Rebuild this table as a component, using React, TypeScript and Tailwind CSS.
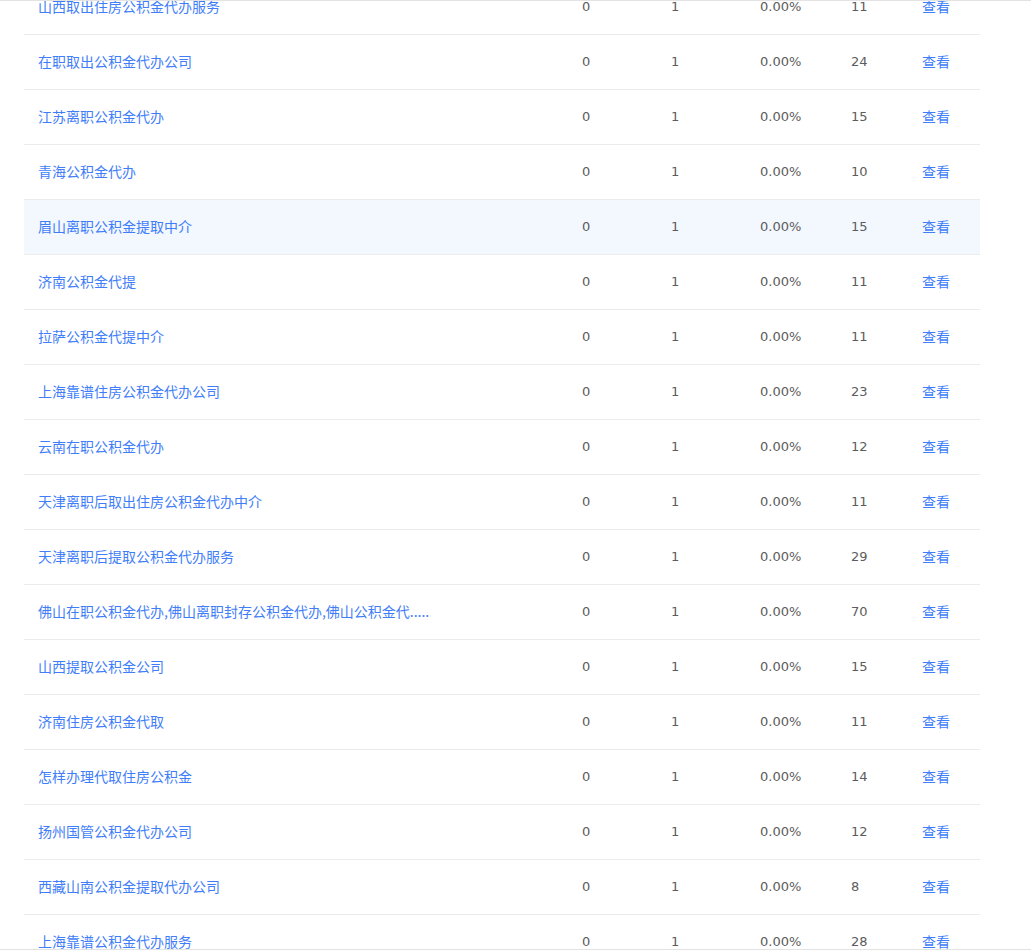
const rows: [string, number][] = [
  ['山西取出住房公积金代办服务', 11],
  ['在职取出公积金代办公司', 24],
  ['江苏离职公积金代办', 15],
  ['青海公积金代办', 10],
  ['眉山离职公积金提取中介', 15],
  ['济南公积金代提', 11],
  ['拉萨公积金代提中介', 11],
  ['上海靠谱住房公积金代办公司', 23],
  ['云南在职公积金代办', 12],
  ['天津离职后取出住房公积金代办中介', 11],
  ['天津离职后提取公积金代办服务', 29],
  ['佛山在职公积金代办,佛山离职封存公积金代办,佛山公积金代.....', 70],
  ['山西提取公积金公司', 15],
  ['济南住房公积金代取', 11],
  ['怎样办理代取住房公积金', 14],
  ['扬州国管公积金代办公司', 12],
  ['西藏山南公积金提取代办公司', 8],
  ['上海靠谱公积金代办服务', 28],
]

const num = "px-[14px] text-[13px] text-[#5c5c5c] font-['DejaVu_Sans',sans-serif]"
const link = 'px-[14px] pb-[2px] text-[14px] text-[#3f7ef8]'

export default function App() {
  return (
    <div className="h-[950px] overflow-hidden border-t border-b border-[#e3e3e3] bg-white font-['Noto_Sans_CJK_SC',sans-serif]">
      <div className="ml-6 mt-[-21px] w-[956px]">
        {rows.map(([name, pv], i) => (
          <div
            key={i}
            className={
              'grid h-[55px] grid-cols-[544px_89px_89px_91px_71px_72px] items-center border-b border-[#ececec] ' +
              (i === 4 ? 'bg-[#f3f7fe]' : '')
            }>
            <a className={'truncate ' + link}>{name}</a>
            <span className={num}>0</span>
            <span className={num}>1</span>
            <span className={num}>0.00%</span>
            <span className={num}>{pv}</span>
            <a className={link}>查看</a>
          </div>
        ))}
      </div>
    </div>
  )
}
